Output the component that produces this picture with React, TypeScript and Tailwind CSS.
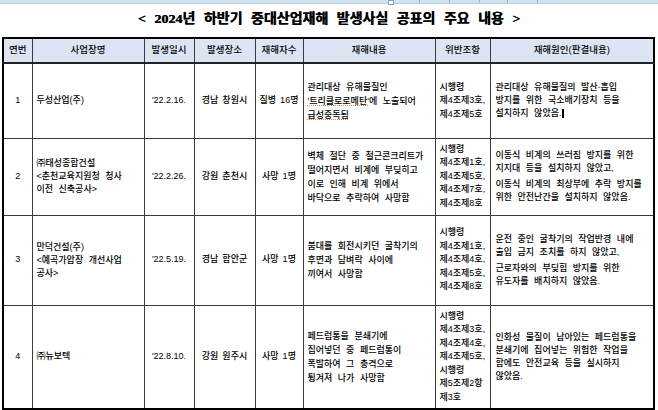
import React from 'react';

const body = "font-['Liberation_Sans','Noto_Sans_CJK_KR',sans-serif]";

type Row = {
  no: string;
  name: string[];
  date: string;
  place: string;
  victims: string;
  detail: string[];
  law: string[];
  cause: string[][];
  h: string;
};

const rows: Row[] = [
  {
    no: '1',
    name: ['두성산업(주)'],
    date: "'22.2.16.",
    place: '경남 창원시',
    victims: '질병 16명',
    detail: ['관리대상 유해물질인', "'트리클로로메탄'에 노출되어", '급성중독됨'],
    law: ['시행령', '제4조제3호,', '제4조제5호'],
    cause: [['관리대상 유해물질의 발산·흡입', '방지를 위한 국소배기장치 등을', '설치하지 않았음.']],
    h: 'h-[75px]',
  },
  {
    no: '2',
    name: ['㈜태성종합건설', '<춘천교육지원청 청사', '이전 신축공사>'],
    date: "'22.2.26.",
    place: '강원 춘천시',
    victims: '사망 1명',
    detail: ['벽체 절단 중 철근콘크리트가', '떨어지면서 비계에 부딪히고', '이로 인해 비계 위에서', '바닥으로 추락하여 사망함'],
    law: ['시행령', '제4조제1호,', '제4조제5호,', '제4조제7호,', '제4조제8호'],
    cause: [
      ['이동식 비계의 쓰러짐 방지를 위한', '지지대 등을 설치하지 않았고,'],
      ['이동식 비계의 최상부에 추락 방지를', '위한 안전난간을 설치하지 않았음.'],
    ],
    h: 'h-[77px]',
  },
  {
    no: '3',
    name: ['만덕건설(주)', '<예곡가압장 개선사업', '공사>'],
    date: "'22.5.19.",
    place: '경남 함안군',
    victims: '사망 1명',
    detail: ['붐대를 회전시키던 굴착기의', '후면과 담벼락 사이에', '끼여서 사망함'],
    law: ['시행령', '제4조제1호,', '제4조제4호,', '제4조제5호,', '제4조제8호'],
    cause: [
      ['운전 중인 굴착기의 작업반경 내에', '출입 금지 조치를 하지 않았고,'],
      ['근로자와의 부딪힘 방지를 위한', '유도자를 배치하지 않았음.'],
    ],
    h: 'h-[90px]',
  },
  {
    no: '4',
    name: ['㈜뉴보텍'],
    date: "'22.8.10.",
    place: '강원 원주시',
    victims: '사망 1명',
    detail: ['페드럼통을 분쇄기에', '집어넣던 중 페드럼통이', '폭발하여 그 충격으로', '튕겨져 나가 사망함'],
    law: ['시행령', '제4조제3호,', '제4조제4호,', '제4조제5호,', '시행령', '제5조제2항', '제3호'],
    cause: [['인화성 물질이 남아있는 페드럼통을', '분쇄기에 집어넣는 위험한 작업을', '함에도 안전교육 등을 실시하지', '않았음.']],
    h: 'h-[104px]',
  },
];

const heads = ['연번', '사업장명', '발생일시', '발생장소', '재해자수', '재해내용', '위반조항', '재해원인(판결내용)'];

function Lines({ lines, className }: { lines: string[]; className?: string }) {
  return (
    <div className={className}>
      {lines.map((l, i) => (
        <div key={i} className="whitespace-nowrap">{l}</div>
      ))}
    </div>
  );
}

export default function App() {
  const cell = 'border border-[#3a3a3a] align-middle p-0';
  const mid = `${cell} text-center whitespace-nowrap [word-spacing:1.5px]`;
  return (
    <div className={`w-[658px] h-[410px] bg-white overflow-hidden text-black ${body}`}>
      <div className="h-[4px] bg-[#d3e2f2] border-b border-[#b9cde3] flex">
        <div className="w-[388px]" />
        <div className="w-[6px] h-[5px] border border-[#7f9fc4] bg-white" />
        <div className="w-[26px] border-r border-[#9db6d3]" />
        <div className="w-[30px] border-r border-[#9db6d3]" />
        <div className="w-[30px] border-r border-[#9db6d3]" />
        <div className="w-[28px] border-r border-[#9db6d3]" />
        <div className="w-[30px] border-r border-[#9db6d3]" />
      </div>
      <div className="h-[33px] flex items-center justify-center pb-[4px]">
        <h1 className="font-['Liberation_Serif','Noto_Sans_CJK_KR',serif] font-bold text-[14px] [word-spacing:5px] scale-y-[0.95] [text-shadow:0.5px_0_0_#000]">
          &lt; 2024년 하반기 중대산업재해 발생사실 공표의 주요 내용 &gt;
        </h1>
      </div>
      <table className="ml-[2px] table-fixed border-collapse border-2 border-black text-[9px] font-medium [word-spacing:3px]">
        <colgroup>
          <col className="w-[29px]" />
          <col className="w-[112px]" />
          <col className="w-[50px]" />
          <col className="w-[61px]" />
          <col className="w-[48px]" />
          <col className="w-[132px]" />
          <col className="w-[55px]" />
          <col className="w-[164px]" />
        </colgroup>
        <thead>
          <tr className="h-[25px] bg-[#dde5f5]">
            {heads.map((h) => (
              <th key={h} className={`${cell} font-medium text-center text-[9.5px] border-b-2 border-b-[#222]`}>
                {h}
              </th>
            ))}
          </tr>
        </thead>
        <tbody>
          {rows.map((r) => (
            <tr key={r.no} className={r.h}>
              <td className={mid}>{r.no}</td>
              <td className={`${cell} pl-[4px]`}>
                <Lines lines={r.name} className="leading-[13px]" />
              </td>
              <td className={mid}>{r.date}</td>
              <td className={mid}>{r.place}</td>
              <td className={mid}>{r.victims}</td>
              <td className={`${cell} pl-[4px]`}>
                <div className="leading-[14px]">
                  {r.detail.map((l, i) => (
                    <div key={i} className="whitespace-nowrap">
                      {r.no === '1' && i === 1 ? (
                        <>
                          <span className="underline decoration-dotted decoration-[#e0803a]">'트리클로로메탄'</span>에 노출되어
                        </>
                      ) : r.no === '1' && i === 2 ? (
                        <span className="underline decoration-dotted decoration-[#e0803a]">{l}</span>
                      ) : (
                        l
                      )}
                    </div>
                  ))}
                </div>
              </td>
              <td className={`${cell} pl-[4px]`}>
                <Lines lines={r.law} className="leading-[13.5px]" />
              </td>
              <td className={`${cell} pl-[5px]`}>
                <div className="flex flex-col gap-[3px] leading-[13px]">
                  {r.cause.map((p, i) => (
                    <div key={i}>
                      {p.map((l, j) => (
                        <div key={j} className="whitespace-nowrap">
                          {l}
                          {r.no === '1' && j === p.length - 1 && (
                            <span className="inline-block w-[2px] h-[9px] bg-black align-middle ml-[1px]" />
                          )}
                        </div>
                      ))}
                    </div>
                  ))}
                </div>
              </td>
            </tr>
          ))}
        </tbody>
      </table>
    </div>
  );
}
